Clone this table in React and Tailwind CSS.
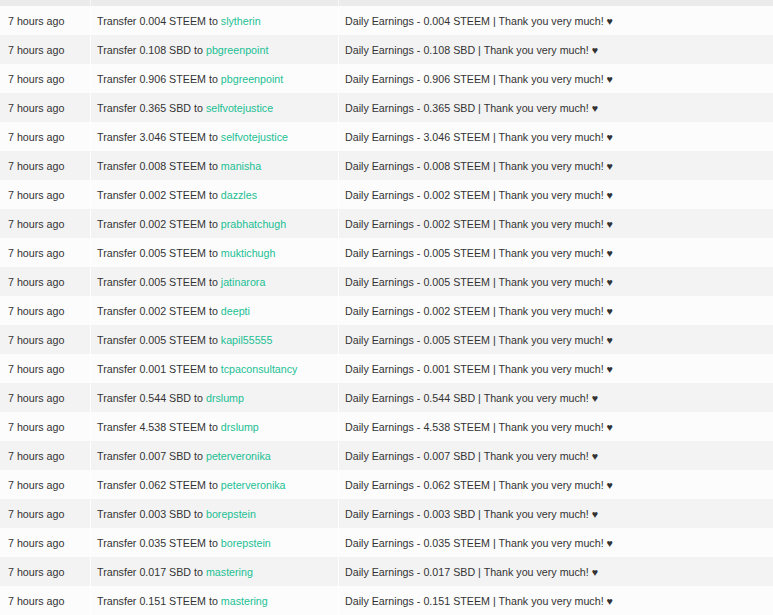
const rows = [
  ["0.004", "STEEM", "slytherin"],
  ["0.108", "SBD", "pbgreenpoint"],
  ["0.906", "STEEM", "pbgreenpoint"],
  ["0.365", "SBD", "selfvotejustice"],
  ["3.046", "STEEM", "selfvotejustice"],
  ["0.008", "STEEM", "manisha"],
  ["0.002", "STEEM", "dazzles"],
  ["0.002", "STEEM", "prabhatchugh"],
  ["0.005", "STEEM", "muktichugh"],
  ["0.005", "STEEM", "jatinarora"],
  ["0.002", "STEEM", "deepti"],
  ["0.005", "STEEM", "kapil55555"],
  ["0.001", "STEEM", "tcpaconsultancy"],
  ["0.544", "SBD", "drslump"],
  ["4.538", "STEEM", "drslump"],
  ["0.007", "SBD", "peterveronika"],
  ["0.062", "STEEM", "peterveronika"],
  ["0.003", "SBD", "borepstein"],
  ["0.035", "STEEM", "borepstein"],
  ["0.017", "SBD", "mastering"],
  ["0.151", "STEEM", "mastering"],
];

export default function App() {
  return (
    <div className="w-[773px] h-[615px] overflow-hidden bg-[#fcfcfc] font-['Liberation_Sans',Arial,sans-serif] text-[10.7px] text-[#333]">
      {/* header strip */}
      <div className="grid grid-cols-[90px_248px_1fr] h-[6px] bg-[#ebebeb]">
        <div />
        <div className="border-l border-[#f6f6f6]" />
        <div className="border-l border-[#f6f6f6]" />
      </div>
      {/* rows */}
      {rows.map(([amt, cur, to], i) => (
        <div
          key={i}
          className={`grid grid-cols-[90px_248px_1fr] h-[29px] items-stretch pt-px ${
            i % 2 === 1 ? "bg-[#f3f3f3]" : "bg-[#fcfcfc]"
          }`}
        >
          <div className="flex items-center pl-[8px]">7 hours ago</div>
          <div className="flex items-center pl-[6px] border-l border-white whitespace-nowrap">
            Transfer {amt} {cur} to&nbsp;<span className="text-[#22bf94]">{to}</span>
          </div>
          <div className="flex items-center pl-[6px] border-l border-white whitespace-nowrap">
            Daily Earnings - {amt} {cur} | Thank you very much! ♥
          </div>
        </div>
      ))}
    </div>
  );
}
